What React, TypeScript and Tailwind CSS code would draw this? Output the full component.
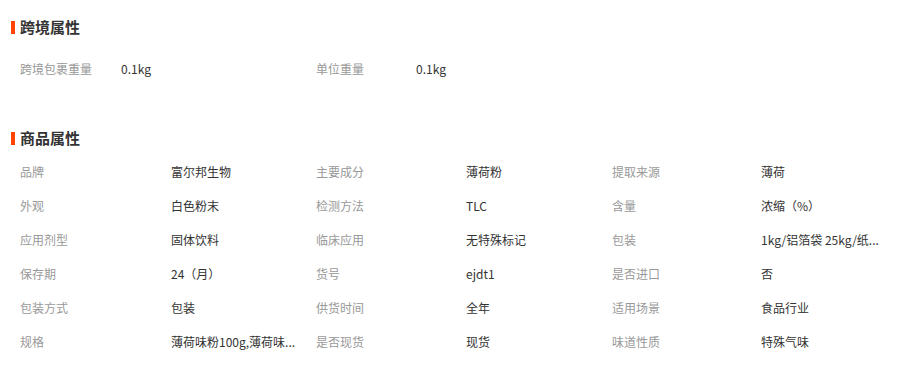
const font = {
  fontFamily: '"Noto Sans CJK SC", "Microsoft YaHei", sans-serif',
};

type Pair = [string, string];

const crossBorder: Pair[] = [
  ["跨境包裹重量", "0.1kg"],
  ["单位重量", "0.1kg"],
];

const attrs: Pair[] = [
  ["品牌", "富尔邦生物"],
  ["主要成分", "薄荷粉"],
  ["提取来源", "薄荷"],
  ["外观", "白色粉末"],
  ["检测方法", "TLC"],
  ["含量", "浓缩（%）"],
  ["应用剂型", "固体饮料"],
  ["临床应用", "无特殊标记"],
  ["包装", "1kg/铝箔袋 25kg/纸..."],
  ["保存期", "24（月）"],
  ["货号", "ejdt1"],
  ["是否进口", "否"],
  ["包装方式", "包装"],
  ["供货时间", "全年"],
  ["适用场景", "食品行业"],
  ["规格", "薄荷味粉100g,薄荷味..."],
  ["是否现货", "现货"],
  ["味道性质", "特殊气味"],
];

function Title({ text }: { text: string }) {
  return (
    <div className="flex h-[20px] items-center pl-[11px]">
      <span className="mr-[5px] h-[13px] w-[4px] bg-[#ff4400]" />
      <span className="text-[15px] font-bold leading-[20px] text-[#333]">
        {text}
      </span>
    </div>
  );
}

export default function App() {
  return (
    <div
      className="h-[365px] w-[906px] overflow-hidden bg-white pt-[17px] text-[12px]"
      style={font}
    >
      <Title text="跨境属性" />
      <div className="mt-[15px] flex h-[34px] items-center pl-[20px]">
        <span className="w-[101px] text-[#999]">{crossBorder[0][0]}</span>
        <span className="w-[195px] text-[#333]">{crossBorder[0][1]}</span>
        <span className="w-[100px] text-[#999]">{crossBorder[1][0]}</span>
        <span className="text-[#333]">{crossBorder[1][1]}</span>
      </div>

      <div className="mt-[42px]">
        <Title text="商品属性" />
      </div>
      <div className="mt-[7px] grid grid-cols-[151px_145px_150px_146px_149px_1fr] pl-[20px]">
        {attrs.map(([k, v]) => (
          <div key={k} className="contents">
            <div className="flex h-[34px] items-center text-[#999]">{k}</div>
            <div className="flex h-[34px] items-center whitespace-nowrap text-[#333]">
              {v}
            </div>
          </div>
        ))}
      </div>
    </div>
  );
}
